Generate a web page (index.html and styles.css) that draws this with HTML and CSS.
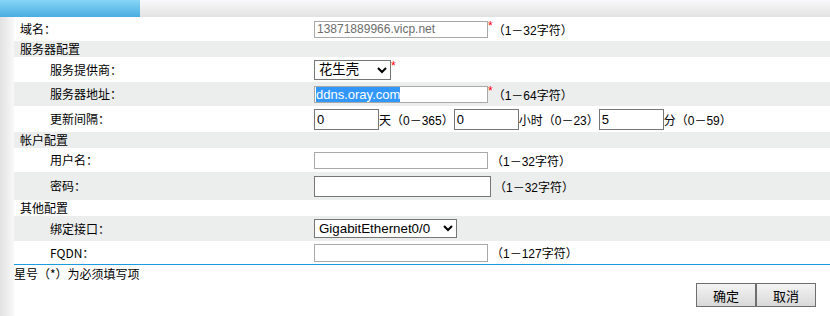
FILE: index.html
```html
<!DOCTYPE html>
<html lang="zh-CN">
<head>
<meta charset="utf-8">
<title>DDNS</title>
<link rel="stylesheet" href="styles.css">
</head>
<body>
<div class="topbar"><div class="tab"></div><div class="tabrest"></div></div>
<div class="main">
  <div class="side"></div>
  <div class="content">
    <div class="rows">
      <div class="row h24">
        <div class="label">域名：</div>
        <div class="field"><input class="inp light ro" value="13871889966.vicp.net" readonly><span class="star">*</span><span class="hint">（1－32字符）</span></div>
      </div>
      <div class="row sec gray"><div class="label">服务器配置</div></div>
      <div class="row h25">
        <div class="label sub">服务提供商：</div>
        <div class="field"><select class="sel w77"><option>花生壳</option></select><span class="star">*</span></div>
      </div>
      <div class="row h24 gray">
        <div class="label sub">服务器地址：</div>
        <div class="field"><div class="inp light fake"><span class="selected">ddns.oray.com</span></div><span class="star">*</span><span class="hint">（1－64字符）</span></div>
      </div>
      <div class="row h26">
        <div class="label sub">更新间隔：</div>
        <div class="field"><input class="inp dark small" value="0"><span class="unit">天（0－365）</span><input class="inp dark small" value="0"><span class="unit">小时（0－23）</span><input class="inp dark small" value="5"><span class="unit">分（0－59）</span></div>
      </div>
      <div class="row sec gray"><div class="label">帐户配置</div></div>
      <div class="row h24">
        <div class="label sub">用户名：</div>
        <div class="field"><input class="inp light"><span class="hint gap">（1－32字符）</span></div>
      </div>
      <div class="row h28 gray">
        <div class="label sub">密码：</div>
        <div class="field"><input class="inp dark pw" type="password"><span class="hint gap">（1－32字符）</span></div>
      </div>
      <div class="row sec"><div class="label">其他配置</div></div>
      <div class="row h25 gray">
        <div class="label sub">绑定接口：</div>
        <div class="field"><select class="sel w143"><option>GigabitEthernet0/0</option></select></div>
      </div>
      <div class="row h23">
        <div class="label sub">FQDN：</div>
        <div class="field"><input class="inp light fq"><span class="hint gap">（1－127字符）</span></div>
      </div>
    </div>
    <div class="footer">
      <div class="note">星号（*）为必须填写项</div>
      <div class="buttons"><button class="btn">确定</button><button class="btn">取消</button></div>
    </div>
  </div>
</div>
</body>
</html>
```
FILE: styles.css
```css
html, body {
  margin: 0;
  padding: 0;
  background: #fff;
}
body {
  width: 830px;
  height: 316px;
  overflow: hidden;
  font-family: "Liberation Sans", "Noto Sans CJK SC", sans-serif;
  font-size: 12px;
  color: #000;
}
.topbar {
  display: flex;
  height: 17px;
}
.tab {
  width: 140px;
  background: linear-gradient(to bottom, #86d5f6, #49ade0);
}
.tabrest {
  flex: 1;
  background: linear-gradient(to bottom, #f9f9fb, #e2e2e2);
}
.main {
  display: flex;
  height: 299px;
}
.side {
  width: 14px;
  background: linear-gradient(to right, #e2e2e2, #f8f8f8);
}
.content {
  flex: 1;
  display: flex;
  flex-direction: column;
}
.row {
  display: flex;
  align-items: center;
}
.gray {
  background: #eceeed;
}
.sec { height: 16px; }
.h23 { height: 23px; }
.h24 { height: 24px; }
.h25 { height: 25px; }
.h26 { height: 26px; }
.h28 { height: 28px; }
.label {
  width: 300px;
  box-sizing: border-box;
  padding-left: 6px;
  font-family: "Noto Sans CJK SC", sans-serif;
  font-size: 12px;
  line-height: 16px;
}
.label.sub {
  padding-left: 36px;
}
.field {
  display: flex;
  align-items: center;
}
.inp {
  box-sizing: border-box;
  margin: 0;
  font-family: "Liberation Sans", Arial, sans-serif;
  font-size: 12px;
  padding: 0 2px;
  background: #fff;
  color: #000;
  outline: none;
  border-radius: 0;
}
.light {
  width: 174px;
  height: 17px;
  border: 1px solid #a9a9a9;
}
.ro {
  color: #6d6d6d;
}
.fq {
  height: 18px;
}
.fake {
  display: flex;
  align-items: center;
  line-height: 15px;
  padding: 0 1px;
}
.selected {
  background: #3297fd;
  color: #fff;
  font-size: 13px;
  line-height: 15px;
}
.dark {
  border: 1px solid #767676;
  height: 21px;
  font-size: 13px;
}
.small {
  width: 65px;
}
.pw {
  width: 177px;
}
.sel {
  margin: 0;
  box-sizing: border-box;
  font-family: "Liberation Sans", "Noto Sans CJK SC", Arial, sans-serif;
  font-size: 13.33px;
  border: 1px solid #767676;
  border-radius: 0;
  background-color: #fff;
  color: #000;
}
.w77 { width: 77px; height: 20px; }
.w143 { width: 143px; height: 19px; }
.star {
  color: #f00;
  font-size: 12px;
  line-height: 12px;
  margin-bottom: 7px;
}
.hint, .unit {
  font-family: "Liberation Sans", "Noto Sans CJK SC", sans-serif;
  font-size: 12px;
  white-space: nowrap;
}
.hint.gap {
  margin-left: 3px;
}
.footer {
  border-top: 1px solid #1a9be2;
  display: flex;
  flex-direction: column;
}
.note {
  font-family: "Noto Sans CJK SC", sans-serif;
  font-size: 12px;
  line-height: 16px;
  padding-top: 1px;
}
.buttons {
  display: flex;
  justify-content: flex-end;
  padding-right: 14px;
  margin-top: 1px;
}
.btn {
  width: 60px;
  height: 24px;
  margin: 0;
  padding: 0;
  border: 1px solid #6e6e6e;
  background: linear-gradient(to bottom, #f4f4f4, #d8d8d8);
  font-family: "Noto Sans CJK SC", sans-serif;
  font-size: 13px;
  color: #000;
  border-radius: 0;
}
```
